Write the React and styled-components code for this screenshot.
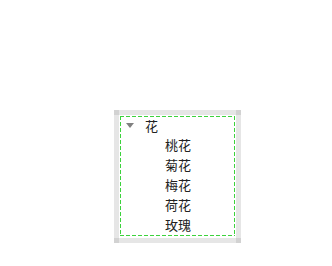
import React from "react";
import styled, { createGlobalStyle } from "styled-components";

const Global = createGlobalStyle`
  html, body { margin: 0; padding: 0; background: #ffffff; }
  body { font-family: "Noto Sans CJK SC", "Liberation Sans", sans-serif; }
`;

const Page = styled.div`
  width: 332px;
  height: 266px;
  padding: 110px 0 0 114px;
  box-sizing: border-box;
`;

const Frame = styled.div`
  position: relative;
  width: 127px;
  height: 133px;
  box-sizing: border-box;
  border: 5px solid #e6e6e6;
  background: #ffffff;
`;

const Corner = styled.span`
  position: absolute;
  width: 5px;
  height: 5px;
  background: #d2d2d2;
  ${(p) => (p.$right ? "right: -5px;" : "left: -5px;")}
  ${(p) => (p.$bottom ? "bottom: -5px;" : "top: -5px;")}
`;

const dash = "#3cd23c";

const Focus = styled.div`
  margin: 2px 1px 0 1px;
  height: 120px;
  box-sizing: border-box;
  background-image:
    repeating-linear-gradient(90deg, ${dash} 0 4px, transparent 4px 6px),
    repeating-linear-gradient(90deg, ${dash} 0 4px, transparent 4px 6px),
    repeating-linear-gradient(180deg, ${dash} 0 4px, transparent 4px 6px),
    repeating-linear-gradient(180deg, ${dash} 0 4px, transparent 4px 6px);
  background-size: 100% 1px, 100% 1px, 1px 100%, 1px 100%;
  background-position: 0 0, 0 100%, 0 0, 100% 0;
  background-repeat: no-repeat;
`;

const Row = styled.div`
  display: flex;
  align-items: center;
  height: 20px;
  padding-left: ${(p) => p.$indent}px;
  font-size: 13px;
  color: #222222;
  line-height: 20px;
`;

const Head = styled(Row)`
  height: 19px;
  margin-top: -1px;
`;

const Arrow = styled.span`
  width: 0;
  height: 0;
  border-left: 4px solid transparent;
  border-right: 4px solid transparent;
  border-top: 5px solid #808080;
  margin-right: 11px;
`;

const items = ["桃花", "菊花", "梅花", "荷花", "玫瑰"];

export default function App() {
  return (
    <>
      <Global />
      <Page>
        <Frame>
          <Corner />
          <Corner $right />
          <Corner $bottom />
          <Corner $right $bottom />
          <Focus>
            <Head $indent={6}>
              <Arrow />
              花
            </Head>
            {items.map((t) => (
              <Row key={t} $indent={45}>
                {t}
              </Row>
            ))}
          </Focus>
        </Frame>
      </Page>
    </>
  );
}
